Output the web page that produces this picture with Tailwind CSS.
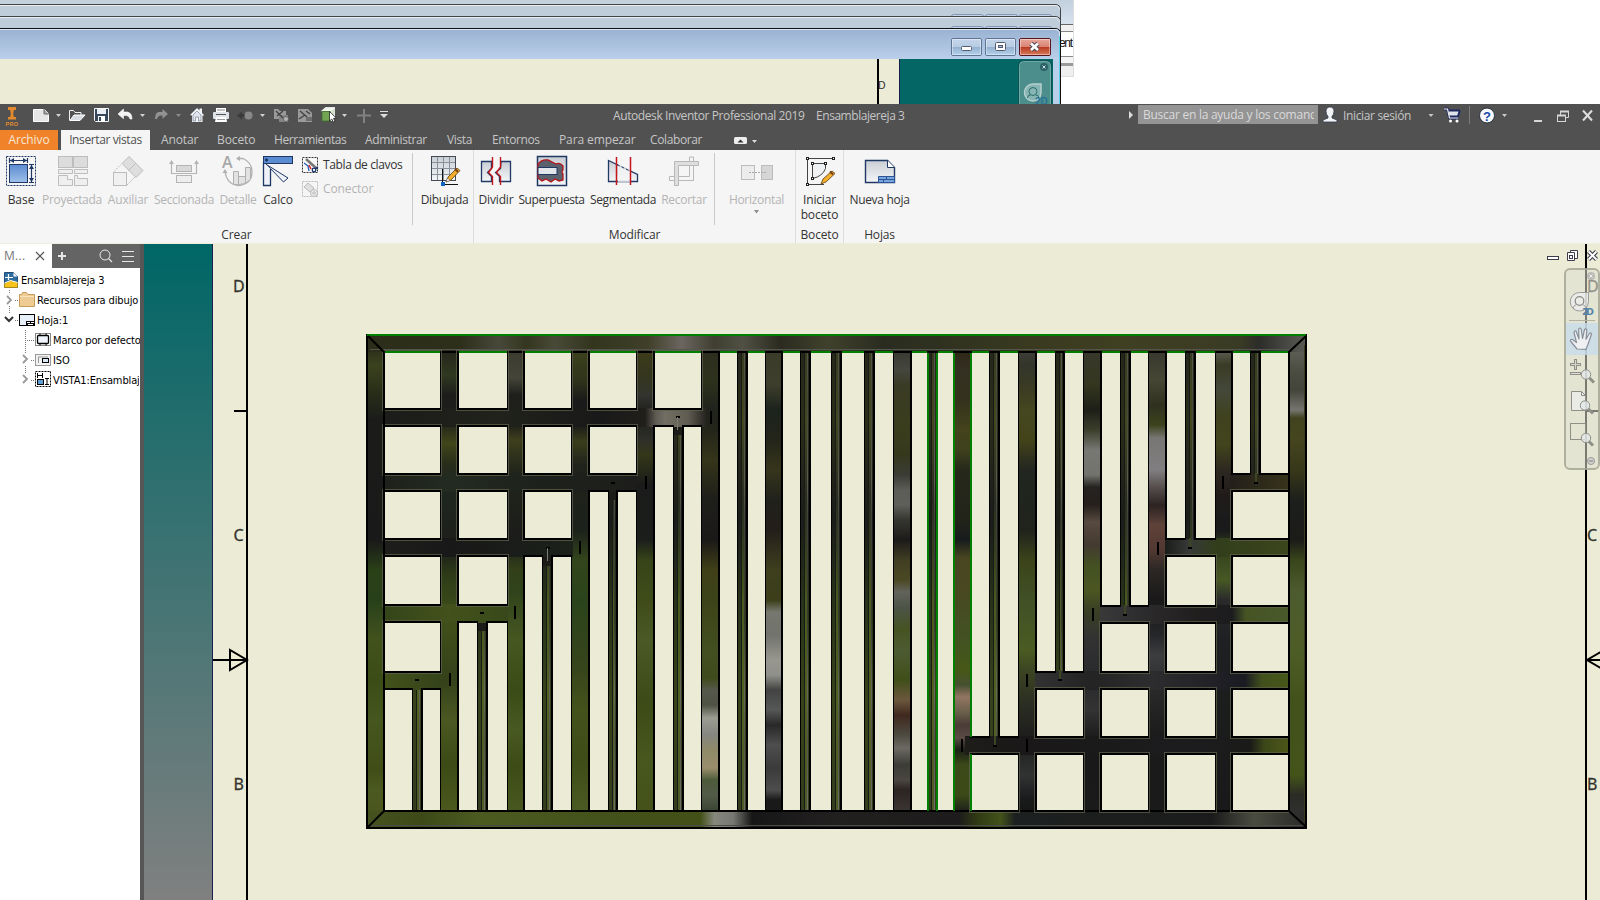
<!DOCTYPE html>
<html lang="es">
<head>
<meta charset="utf-8">
<title>Autodesk Inventor Professional 2019</title>
<script src="https://cdn.jsdelivr.net/npm/@tailwindcss/browser@4"></script>
</head>
<body class="bg-white">
<div class="w-[1600px] h-[900px] overflow-hidden flex flex-col font-['Open_Sans','Noto_Sans',sans-serif] text-[12px] text-[#333]">

  <!-- stacked background windows -->
  <div class="relative h-[104px] shrink-0 overflow-hidden bg-white">
    <svg class="block" width="1600" height="104" viewBox="0 0 1600 104">
      <defs>
        <linearGradient id="aero" x1="0" y1="0" x2="0" y2="1"><stop offset="0" stop-color="#9ab2d2"/><stop offset="1" stop-color="#b9cfea"/></linearGradient>
        <linearGradient id="aeroBack" x1="0" y1="0" x2="0" y2="1"><stop offset="0" stop-color="#c2cfdc"/><stop offset="1" stop-color="#d7e3ef"/></linearGradient>
        <linearGradient id="cap" x1="0" y1="0" x2="0" y2="1"><stop offset="0" stop-color="#c5d6ea"/><stop offset=".48" stop-color="#b7cce3"/><stop offset=".5" stop-color="#93b0cf"/><stop offset="1" stop-color="#b5d3ec"/></linearGradient>
        <linearGradient id="capR" x1="0" y1="0" x2="0" y2="1"><stop offset="0" stop-color="#e9a99d"/><stop offset=".48" stop-color="#d98474"/><stop offset=".5" stop-color="#b9381f"/><stop offset="1" stop-color="#d8805f"/></linearGradient>
      </defs>
      <rect width="1073" height="24" fill="url(#aeroBack)"/>
      <rect x="1050" y="24" width="23" height="1" fill="#666"/>
      <rect x="1050" y="25" width="23" height="6" fill="#f1f1f1"/>
      <rect x="1050" y="31" width="23" height="1" fill="#888"/>
      <text x="1059" y="47" font-size="12" fill="#111" font-family="Liberation Sans" textLength="14">ent</text>
      <rect x="1050" y="56" width="23" height="1" fill="#888"/>
      <rect x="1050" y="57" width="23" height="6" fill="#f4f4f4"/>
      <rect x="1050" y="63" width="23" height="3" fill="#999"/>
      <rect x="1050" y="66" width="23" height="10" fill="#efefef"/>
      <rect x="1050" y="76" width="23" height="1" fill="#ddd"/>
      <rect x="1073" width="1" height="77" fill="#ddd"/>
      <path d="M-3 4.500H1055Q1060.500 4.500 1060.500 10V108H-3Z" fill="#bfcddb" stroke="#444"/>
      <path d="M0 5.500H1055Q1059.500 6 1059.500 10" fill="none" stroke="#e4ecf4"/>
      <g fill="#c5d3e2" stroke="#8496b8"><rect x="951.500" y="14.500" width="32" height="8" rx="2"/><rect x="985.500" y="14.500" width="32" height="8" rx="2"/><rect x="1019.500" y="14.500" width="32" height="8" rx="2"/></g>
      <path d="M-3 16.500H1055Q1060.500 16.500 1060.500 22V108H-3Z" fill="#bfcddb" stroke="#444"/>
      <path d="M0 17.500H1055Q1059.500 18 1059.500 22" fill="none" stroke="#e4ecf4"/>
      <g fill="#c5d3e2" stroke="#8496b8"><rect x="951.500" y="26.500" width="32" height="8" rx="2"/><rect x="985.500" y="26.500" width="32" height="8" rx="2"/><rect x="1019.500" y="26.500" width="32" height="8" rx="2"/></g>
      <path d="M-3 28.500H1055Q1060.500 28.500 1060.500 34V108H-3Z" fill="#b9cfea" stroke="#111"/>
      <path d="M0 29H1055Q1060 29 1060 34V59H0Z" fill="url(#aero)"/>
      <path d="M0 29.500H1055Q1059.500 30 1059.500 34V104" fill="none" stroke="#dbe9f6"/>
      <path d="M1059.500 36V104" stroke="#58d0e8"/>
      <g stroke="#5f7596"><rect x="951.500" y="38.500" width="30" height="17" rx="1.500" fill="url(#cap)"/><rect x="985.500" y="38.500" width="30" height="17" rx="1.500" fill="url(#cap)"/><rect x="1019.500" y="38.500" width="31" height="17" rx="1.500" fill="url(#capR)" stroke="#5a1620"/></g>
      <g fill="none" stroke="#fff" stroke-opacity=".4"><rect x="952.500" y="39.500" width="28" height="15"/><rect x="986.500" y="39.500" width="28" height="15"/><rect x="1020.500" y="39.500" width="29" height="15"/></g>
      <rect x="961.500" y="46.500" width="10" height="4" rx="1" fill="#fff" stroke="#555c70"/>
      <rect x="995.500" y="42.500" width="10" height="8" rx="1" fill="#fff" stroke="#555c70"/><rect x="998.500" y="45.500" width="4" height="2" fill="#9fb8d4" stroke="#555c70"/>
      <path d="M1031 43.500l7 6.500m0-6.500l-7 6.500" stroke="#504a5a" stroke-width="4.500"/><path d="M1031 43.500l7 6.500m0-6.500l-7 6.500" stroke="#fff" stroke-width="2.500"/>
      <rect y="59" width="899" height="45" fill="#ecebd5"/>
      <rect x="877" y="59" width="2" height="45" fill="#000"/>
      <text x="878" y="89" font-size="11" fill="#333" font-family="DejaVu Sans Condensed">D</text>
      <rect x="899" y="59" width="154" height="45" fill="#056666"/><rect x="899" y="59" width="1" height="45" fill="#16204e"/>
      <rect x="1018" y="60" width="34" height="60" rx="5" fill="#0a5556"/>
      <rect x="1019.500" y="61.500" width="31" height="60" rx="4" fill="#4b8e8c" stroke="#6ea9a6"/>
      <circle cx="1044" cy="67" r="4" fill="#2b6163"/><path d="M1042.500 65.500l3 3m0-3l-3 3" stroke="#cde"/>
      <path d="M1033 84h8v9q-1 8-8 8a8.500 8.500 0 0 1 0-17Z" fill="#86b5b3" stroke="#b5d0ce" stroke-width="1.500"/>
      <circle cx="1033" cy="91.500" r="4" fill="none" stroke="#2d6d6d"/><path d="M1027.500 98q0-3 3-3m8.500 3q0-3-3-3" fill="none" stroke="#2d6d6d"/>
      <text x="1035" y="105" font-size="10" font-weight="bold" fill="#28749a" font-family="Liberation Sans">2D</text>
    </svg>
  </div>

  <!-- title bar -->
  <div class="h-[26px] shrink-0 bg-[#515151] flex items-center text-[#c6c6c6]">
    <svg class="shrink-0" width="400" height="26" viewBox="0 104 400 26">
      <g fill="#e28a2d"><path d="M8 107h8v3h-2.200l-.6 4 .6 3H16v2.500H8V117h2.200l.6-3-.6-4H8Z"/></g>
      <text x="5.500" y="126" font-size="5.500" font-weight="bold" fill="#e28a2d" font-family="Liberation Sans" textLength="12.500">PRO</text>
      <path d="M33.500 109.500h11l4 4v8h-15Z" fill="#e6e6e6" stroke="#fff"/><path d="M44 109v5h5" fill="#aaa" stroke="#666"/>
      <path d="M69.500 120.500v-10h4l1.500 2h6v2.500" fill="none" stroke="#f0f0f0"/><path d="M70 120.500l4-5.500h11l-5 5.500Z" fill="#d8dde4" stroke="#fff"/>
      <path d="M94.500 108.500h14v13h-13l-1-1Z" fill="#37475c" stroke="#f4f4f4"/><rect x="97" y="109" width="9" height="5" fill="#e9eef4"/><rect x="98" y="116" width="7" height="6" fill="#fff"/><rect x="99" y="117" width="2" height="4" fill="#37475c"/>
      <path d="M123.500 109v3h4q4.500 1 4.500 7h-2q-.5-3-3.500-3.500h-3v3.200L118 114Z" fill="#f4f4f4" stroke="#fff" stroke-width=".6"/>
      <path d="M162.500 109v3h-4q-3.500 1-3.500 7h2q.5-3 3-3.500h2.500v3.200L168 114Z" fill="#929292"/>
      <path d="M190 115l7-7 2.500 2.500V108.500h2.500v4.500l2.500 2.500h-2v6.500h-10.500v-6.500Z" fill="#f2f4f7"/><path d="M193 115l4-4 4 4v6h-2.500v-4h-3v4H193Z" fill="#dfe6ef" stroke="#66727f" stroke-width=".6"/>
      <path d="M216 113v-5h10v5" fill="#fff"/><path d="M217 110h8" stroke="#888"/><rect x="213" y="112" width="16" height="7" rx="1" fill="#dfe3e8"/><rect x="216" y="114" width="10" height="1" fill="#555"/><path d="M216 117h10l1 5h-12Z" fill="#fff"/><path d="M217 119.500h8" stroke="#999"/>
      <path d="M237 115.500l5-4v2.500h3v3h-3v2.500Z" fill="#3a3a3a"/><circle cx="248.500" cy="115.500" r="4" fill="#888"/>
      <g fill="#9a9a9a"><path d="M274 109h4l2 2h6v4l-3 4h-9Z"/><path d="M279 115h9v7h-9Z" fill="#858585"/><path d="M276 111l7 7m-6-2l6-5" stroke="#444" stroke-width="1.400"/><circle cx="286" cy="119" r="2.500" fill="#b5b5b5" stroke="#555" stroke-width=".7"/></g>
      <g fill="#9a9a9a"><path d="M298 109h10l4 4v9h-14Z"/><path d="M300 111l7 6m-1-6l4 3M299 119l6-4" stroke="#444" stroke-width="1.500"/><path d="M306 117h6v4h-6Z" fill="#6e6e6e"/></g>
      <path d="M321.500 111l4-3.500h9l-3.500 3.500Z" fill="#eef6ea" stroke="#fff" stroke-width=".7"/><path d="M322 111.500h9v9.500h-9Z" fill="#71a552" stroke="#3d6d2a" stroke-width=".8"/><path d="M331 111l3.500-3.500v9.500l-3.500 4Z" fill="#cfe0c6" stroke="#fff" stroke-width=".7"/>
      <path d="M329.500 111.500v9.500l2.300-2 1.600 3.200 1.600-.9-1.500-3h3Z" fill="#fff" stroke="#222" stroke-width=".8"/>
      <path d="M364 109v14M357 115.500h14" stroke="#818181" stroke-width="2"/>
      <path d="M380 111.500h8" stroke="#ddd"/><path d="M380 114h8l-4 4Z" fill="#ddd"/>
      <g fill="#d0d0d0"><path d="M56 114h5l-2.500 3ZM140 114h5l-2.500 3ZM260 114h5l-2.500 3ZM342 114h5l-2.500 3Z"/><path d="M176 114h5l-2.500 3Z" fill="#8c8c8c"/></g>
    </svg>
    <div class="w-[213px] shrink-0"></div>
    <div class="w-[203px] shrink-0 whitespace-nowrap pb-[2px] tracking-[-0.4px] -mt-px">Autodesk Inventor Professional 2019</div>
    <div class="w-[313px] shrink-0 whitespace-nowrap pb-[2px] tracking-[-0.45px] -mt-px">Ensamblajereja 3</div>
    <div class="w-0 h-0 border-y-[4px] border-y-transparent border-l-[4px] border-l-[#ddd] shrink-0 mb-[4px]"></div>
    <div class="ml-[5px] w-[180px] h-[19px] -mt-[6px] bg-[#949494] shrink-0 overflow-hidden whitespace-nowrap text-[#dadada] pl-[5px] leading-[19px] tracking-[-0.26px]"><div class="w-[171px] overflow-hidden">Buscar en la ayuda y los comandos</div></div>
    <svg class="shrink-0 ml-[4px]" width="18" height="26" viewBox="1322 104 18 26"><path d="M1330 107q4 0 4 4.500 0 3-2 5v1.500l5 2v2h-14v-2l5-2v-1.500q-2-2-2-5 0-4.500 4-4.500Z" fill="#f2f4f8" stroke="#333b4c" stroke-width=".8"/></svg>
    <div class="w-[85px] shrink-0 ml-[3px] whitespace-nowrap pb-[2px] tracking-[-0.35px]">Iniciar sesión</div>
    <svg class="shrink-0" width="172" height="26" viewBox="1428 104 172 26">
      <path d="M1428.500 114h5l-2.500 3ZM1502 114h5l-2.500 3Z" fill="#c8c8c8"/>
      <path d="M1444 109h3.500l2 9h8.500m-10-7h11l-1.500 5h-8.500" fill="#8c96b8" stroke="#1e2960" stroke-width="2.800" stroke-linejoin="round"/><path d="M1444 109h3.500l2 9h8.500" fill="none" stroke="#eee" stroke-width="1.200"/><path d="M1448.500 111.500h10l-1.300 4h-8Z" fill="#dfe3ea"/><circle cx="1450.500" cy="121" r="1.500" fill="#fff"/><circle cx="1457" cy="121" r="1.500" fill="#fff"/>
      <rect x="1469" y="106" width="1" height="18" fill="#7b7b7b"/>
      <circle cx="1487" cy="115.500" r="7.500" fill="#f6f8fc" stroke="#252c3c"/><text x="1487" y="120.500" text-anchor="middle" font-size="13" font-weight="bold" fill="#1747a8" font-family="Liberation Sans">?</text>
      <rect x="1534" y="120" width="8" height="2" fill="#d6d6d6"/>
      <path d="M1560.500 115v-3.500h8v6h-2.500" fill="none" stroke="#d6d6d6"/><path d="M1560 111.500h9M1557 115.500h9" stroke="#d6d6d6" stroke-width="2"/><rect x="1557.500" y="115.500" width="8" height="6" fill="none" stroke="#d6d6d6"/>
      <path d="M1583 110.500l9 10m0-10l-9 10" stroke="#dedede" stroke-width="2"/>
    </svg>
  </div>

  <!-- ribbon tabs -->
  <div class="h-5 shrink-0 bg-[#515151] flex text-[#c6c6c6] leading-5 whitespace-nowrap tracking-[-0.38px]">
    <div class="w-[58px] bg-[#f08229] text-center text-[#f6e6d6] tracking-[-0.1px]">Archivo</div>
    <div class="ml-[3px] w-[89px] bg-[#f5f5f5] text-center text-[#505050]">Insertar vistas</div>
    <div class="ml-[11px] w-[56px] tracking-[-0.1px]">Anotar</div>
    <div class="w-[57px] tracking-[-0.1px]">Boceto</div>
    <div class="w-[91px]">Herramientas</div>
    <div class="w-[82px]">Administrar</div>
    <div class="w-[45px]">Vista</div>
    <div class="w-[67px]">Entornos</div>
    <div class="w-[91px] tracking-[-0.1px]">Para empezar</div>
    <div class="w-[83px]">Colaborar</div>
    <svg width="26" height="20" viewBox="733 130 26 20"><rect x="734" y="137" width="13" height="7" rx="1.500" fill="#eee"/><path d="M737.500 142.500h6l-3-3Z" fill="#333"/><path d="M752 140h5l-2.500 3Z" fill="#ddd"/></svg>
  </div>

  <!-- ribbon panels -->
  <div class="h-[94px] shrink-0 bg-[#f5f5f5] border-b border-[#eeeed8] flex whitespace-nowrap tracking-[-0.3px] leading-[15px]" id="ribbon">
    <div class="w-[473px] shrink-0 flex flex-col">
      <div class="flex h-[78px] pt-[5px]">
        <div class="w-[42px] flex flex-col items-center"><svg width="32" height="32" viewBox="0 0 32 32"><rect x="1.500" y="1.500" width="29" height="29" fill="none" stroke="#1f3864" stroke-dasharray="2 1"/><defs><linearGradient id="bl" x1="0" y1="0" x2="0" y2="1"><stop offset="0" stop-color="#5b8bd0"/><stop offset="1" stop-color="#9fc0ea"/></linearGradient><linearGradient id="gy" x1="0" y1="0" x2="0" y2="1"><stop offset="0" stop-color="#c9ced4"/><stop offset="1" stop-color="#f4f6f8"/></linearGradient></defs><rect x="4.500" y="9.500" width="18" height="18" fill="url(#bl)" stroke="#1f3864"/><path d="M4.500 3v5M22.500 3v5M5 5.500h17M24 9.500h5M24 27.500h5M26.500 10v17" stroke="#1f3864" stroke-width="1.200"/><path d="M5 5.500l4-2.500v5ZM22 5.500l-4-2.500v5ZM26.500 10l-2.500 4h5ZM26.500 27l-2.500-4h5Z" fill="#1f3864"/></svg><span class="mt-[5px] tracking-[-0.05px]">Base</span></div>
        <div class="w-[60px] flex flex-col items-center text-[#b4b4b4]"><svg width="32" height="32" viewBox="0 0 32 32" stroke="#bdbdbd" class="ml-[2px]"><g fill="#dcdcdc"><rect x="1.500" y="1.500" width="14" height="11"/><rect x="16.500" y="1.500" width="14" height="11"/></g><g fill="#efefef"><path d="M1.500 14.500h14v4h-14ZM17.500 14.500h13v4h-13ZM1.500 20.500h9v4h5v6h-14ZM17.500 20.500h3v3h10v7h-13Z"/></g></svg><span class="mt-[5px]">Proyectada</span></div>
        <div class="w-[52px] flex flex-col items-center text-[#b4b4b4]"><svg width="32" height="32" viewBox="0 0 32 32" stroke="#bcbcbc"><path d="M17 1.500l14 14-7 7-14-14Z" fill="#dedede"/><path d="M23.500 8.500l-7 7"/><rect x="1.500" y="17.500" width="13" height="13" fill="#f0f0f0"/><path d="M2 16.500l7-7M15 30l8-8" stroke-dasharray="2 1"/></svg><span class="mt-[5px] tracking-[-0.2px]">Auxiliar</span></div>
        <div class="w-[60px] flex flex-col items-center text-[#b4b4b4]"><svg width="32" height="32" viewBox="0 0 32 32" stroke="#b4b4b4"><rect x="8.500" y="10.500" width="15" height="6" fill="#d8d8d8"/><rect x="8.500" y="20.500" width="15" height="7" fill="#eee"/><path d="M3.500 7v11.500h25V7" fill="none" stroke-width="1.200"/><path d="M3.500 5l-2.500 4h5ZM28.500 5l-2.500 4h5Z" fill="#b4b4b4" stroke="none"/></svg><span class="mt-[5px]">Seccionada</span></div>
        <div class="w-[48px] flex flex-col items-center text-[#b4b4b4]"><svg width="32" height="32" viewBox="0 0 32 32" stroke="#b0b0b0"><text x="0" y="13" font-size="16" fill="#a8a8a8" stroke="none" font-weight="600">A</text><path d="M15 3.500h6q9 4 9 13 0 13-14 14-11-1-13-14" fill="none" stroke-width="1.300"/><path d="M14 3.500l4-2.500v5ZM3 14l-2.500 4h5Z" fill="#b0b0b0" stroke="none"/><path d="M11.500 16.500h5v5h7v-9h5v12q-6 6-17 5Z" fill="#e2e2e2"/><path d="M16.500 21v8M23.500 21v7"/></svg><span class="mt-[5px]">Detalle</span></div>
        <div class="w-[32px] flex flex-col items-center"><svg width="32" height="32" viewBox="0 0 32 32" stroke="#1f3864"><path d="M2 8l24 15-4.500 4L5 10Z" fill="#eef2f8" stroke-linejoin="round"/><path d="M1.500 7v23.500h7V14" fill="#eef2f8" stroke-width="1.300"/><rect x="1.500" y="1.500" width="29" height="7" fill="#5b8bd0"/><circle cx="4.500" cy="5" r="1.200" fill="#1f3864"/></svg><span class="mt-[5px] tracking-[-0.1px]">Calco</span></div>
        <div class="ml-[7px] flex flex-col w-[112px] border-r border-[#c9c9c9] h-[72px] -mt-[2px] pt-[1px]">
          <div class="flex items-center h-6 gap-1 -mt-px"><svg width="18" height="18" viewBox="0 0 18 18"><rect x="1.500" y="1.500" width="15" height="15" fill="#f8f8f8" stroke="#333" stroke-dasharray="2 1"/><path d="M3 7l4 3 1 5" fill="none" stroke="#2b67c0" stroke-width="1.400"/><path d="M5 3l10 9" stroke="#777" stroke-width="2.500"/><path d="M8 9l2 4" stroke="#d22" stroke-width="1.500"/><circle cx="13" cy="14" r="1.800" fill="none" stroke="#16336b" stroke-width="1.300"/><circle cx="16" cy="12" r="1.200" fill="#16336b"/></svg><span class="pb-[1px] tracking-[-0.38px]">Tabla de clavos</span></div>
          <div class="flex items-center h-6 gap-1 text-[#b4b4b4]"><svg width="18" height="18" viewBox="0 0 18 18" fill="none" stroke="#bbb"><rect x="1.500" y="1.500" width="15" height="15" stroke-dasharray="2 1"/><path d="M3 7l4-4 6 5-4 4Z" fill="#e0e0e0"/><circle cx="13" cy="13" r="3.500" fill="#eee"/><circle cx="13" cy="13" r="1.300"/></svg><span class="pb-[1px] tracking-[-0.1px]">Conector</span></div>
        </div>
        <div class="w-[60px] flex flex-col items-center pl-[3px]"><svg width="32" height="32" viewBox="0 0 32 32"><rect x="2.500" y="1.500" width="24" height="24" fill="url(#gy)" stroke="#444a55"/><path d="M8.500 2v23M14.500 2v23M20.500 2v23M3 7.500h23M3 13.500h23M3 19.500h23" stroke="#8a919b"/><path d="M13.500 14v13M14 29.500h15" stroke="#111"/><rect x="12" y="27" width="4" height="4" fill="#0b63c0"/><path d="M17 27l2-5 9-9 3 2.500-9 9.500Z" fill="#f2ae2c" stroke="#5b3a10" stroke-width=".8"/><path d="M26 14l3 3" stroke="#7a4010" stroke-width="2"/><path d="M17 27l1.500-4 2.500 2.500Z" fill="#fff" stroke="#444" stroke-width=".5"/></svg><span class="mt-[5px]">Dibujada</span></div>
      </div>
      <div class="text-center -mt-[1px] tracking-[-0.1px]">Crear</div>
    </div>
    <div class="w-[322px] shrink-0 flex flex-col border-l border-[#dcdcdc]">
      <div class="flex h-[78px] pt-[5px]">
        <div class="w-[44px] shrink-0 flex flex-col items-center"><svg width="32" height="32" viewBox="0 0 32 32"><path d="M1.500 6.500h10v7l-4 4 4 4v5h-10ZM21 6.500h9.500v20H19.500v-5l-4-4 5-4Z" fill="url(#gy)" stroke="#1f3864" stroke-width="1.300"/><path d="M12.500 2v10l-4 5.500 4 4V30M20.500 2v10l-4 5.500 4 4V30" fill="none" stroke="#c4161c" stroke-width="1.400"/></svg><span class="mt-[5px] tracking-[-0.15px]">Dividir</span></div>
        <div class="w-[67px] shrink-0 flex flex-col items-center"><svg width="32" height="32" viewBox="0 0 32 32"><rect x="1.500" y="1.500" width="29" height="29" fill="url(#gy)" stroke="#1f3864" stroke-width="1.500"/><path d="M2 9q4-5 10-4 4 2 8 4 4-2 7 2v4q-2 1 0 4v6l-4 1-4-2-4 3-5-3-4 2-4-3Z" fill="#5b626e" stroke="#b3161c" stroke-width="1.300"/><rect x="2" y="12.500" width="19" height="7" fill="#e2e5ea" stroke="#1f3864"/></svg><span class="mt-[5px] tracking-[-0.45px]">Superpuesta</span></div>
        <div class="w-[76px] shrink-0 flex flex-col items-center"><svg width="32" height="32" viewBox="0 0 32 32"><path d="M1.500 5.500l29 14v7h-29Z" fill="url(#gy)" stroke="#1f3864" stroke-width="1.300"/><rect x="11" y="7" width="12" height="20" fill="#f5f5f5" opacity=".75"/><path d="M10 9.500l14 7" stroke="#1f3864" stroke-dasharray="3 2"/><path d="M9.500 2v28M23.500 2v28" stroke="#c4161c" stroke-width="1.500"/></svg><span class="mt-[5px] tracking-[-0.4px]">Segmentada</span></div>
        <div class="w-[46px] shrink-0 flex flex-col items-center text-[#b4b4b4]"><svg width="32" height="32" viewBox="0 0 32 32" fill="#dedede" stroke="#b8b8b8"><path d="M6.500 6.500h24v4H10.500v20h-4Z"/><path d="M21.500 6v-4h4v4M21.500 11v10.500H11M25.500 11v14.500H11M6 21.500H1.500v4H6" fill="none"/></svg><span class="mt-[5px]">Recortar</span></div>
        <div class="w-[8px] shrink-0 h-[72px] -mt-[2px] border-r border-[#c9c9c9]"></div>
        <div class="w-[83px] shrink-0 flex flex-col items-center text-[#b4b4b4]"><svg width="34" height="32" viewBox="0 0 34 32" stroke="#bcbcbc"><rect x="1.500" y="10.500" width="13" height="14" fill="#ececec"/><rect x="21.500" y="10.500" width="11" height="14" fill="#d6d6d6"/><path d="M9 17.500h18" stroke="#aaa" stroke-dasharray="2 1"/></svg><span class="mt-[5px]">Horizontal</span><svg class="mt-[3px]" width="6" height="4"><path d="M0 0h5l-2.500 3.500Z" fill="#8c8c8c"/></svg></div>
      </div>
      <div class="text-center -mt-[1px] tracking-[-0.15px]">Modificar</div>
    </div>
    <div class="w-[49px] shrink-0 flex flex-col border-x border-[#dcdcdc]">
      <div class="flex flex-col items-center h-[78px] pt-[5px]"><svg width="32" height="32" viewBox="0 0 32 32" fill="none" stroke="#444"><path d="M2.500 3.500h28M3.500 2.500v26M3 29.500h17"/><path d="M8.500 8.500h13v5q-3 8-13 10Z" fill="#f0f1f3"/><g fill="#fff" stroke="#222"><rect x="2.500" y="2.500" width="2" height="2"/><rect x="28.500" y="2.500" width="2" height="2"/><rect x="2.500" y="28.500" width="2" height="2"/><rect x="7.500" y="7.500" width="2" height="2"/><rect x="20.500" y="7.500" width="2" height="2"/><rect x="7.500" y="22.500" width="2" height="2"/></g><path d="M17 29l2-5 9-8 3 2.500-9 8.500Z" fill="#f2ae2c" stroke="#5b3a10" stroke-width=".8"/><path d="M26 16.500l3 3" stroke="#7a4010" stroke-width="2"/></svg><span class="mt-[5px] text-center tracking-[-0.15px]">Iniciar<br>boceto</span></div>
      <div class="text-center -mt-[1px] tracking-[-0.15px]">Boceto</div>
    </div>
    <div class="w-[71px] shrink-0 flex flex-col">
      <div class="flex flex-col items-center h-[78px] pt-[5px]"><svg width="32" height="32" viewBox="0 0 32 32"><path d="M1.500 5.500h22l7 7v15h-29Z" fill="url(#gy)" stroke="#1f3864" stroke-width="1.400"/><path d="M23.500 5.500v7h7" fill="#fff" stroke="#1f3864"/><path d="M14.500 21.500h16v6h-16Z" fill="#7aa5dc" stroke="#2b5597"/><path d="M14 24.500h17M22.500 22v2.500M19.500 24.500v3" stroke="#2b5597"/></svg><span class="mt-[5px]">Nueva hoja</span></div>
      <div class="text-center -mt-[1px] tracking-[-0.15px]">Hojas</div>
    </div>
  </div>

  <!-- work area -->
  <div class="h-[656px] shrink-0 flex">
    <!-- model browser -->
    <div class="w-[140px] shrink-0 bg-white flex flex-col overflow-hidden">
      <div class="h-6 flex bg-[#646464] shrink-0">
        <div class="w-[52px] bg-white flex items-center pl-1 text-[#777] pb-[1px]"><span class="w-[31px] tracking-[0.3px]">M...</span><svg width="10" height="10" viewBox="0 0 10 10"><path d="M1 1l8 8m0-8l-8 8" stroke="#555" stroke-width="1.200"/></svg></div>
        <svg width="88" height="24" viewBox="52 244 88 24" fill="none" stroke="#e6e6e6"><path d="M62 252v8M58 256h8" stroke-width="2"/><circle cx="105" cy="255" r="5"/><path d="M108.500 258.500l3.500 3.500M122 251.500h12M122 256.500h12M122 261.500h12" stroke-width="1.200"/></svg>
      </div>
      <div class="flex flex-col pt-[3px] pl-1 font-['DejaVu_Sans_Condensed','DejaVu_Sans',sans-serif] text-[11px] text-black whitespace-nowrap tracking-[-0.13px] leading-[20px] [&_svg]:-translate-y-px">
        <div class="h-5 flex items-center"><svg class="mr-[3px] shrink-0" width="14" height="16" viewBox="0 0 14 16"><path d="M.5 .5h9l4 4v11h-13Z" fill="#2f6d9f" stroke="#1f4e7a"/><path d="M9.500 .5v4h4Z" fill="#fff"/><path d="M.5 15.500v-4l6-3 7 2v5Z" fill="#f6c21c" stroke="#b98a00" stroke-width=".6"/><path d="M.5 11l6-2.500 7 2" fill="none" stroke="#fff"/><path d="M1 5.500h8M4.500 2v6" stroke="#fff" stroke-width="1.200"/></svg>Ensamblajereja 3</div>
        <div class="h-5 flex items-center"><svg class="mr-[2px] shrink-0" width="31" height="20" viewBox="4 290 31 20"><path d="M7 296l4 4-4 4" fill="none" stroke="#999" stroke-width="1.800"/><path d="M9.500 290v4M9.500 306v4M15 300.500h4" stroke="#777" stroke-dasharray="1 1"/><path d="M19.500 306.500v-12h2l1-2h4l1.500 2h6.500v12Z" fill="#edcb92" stroke="#c79b59"/><path d="M20 296.500h14" stroke="#f9e4bd"/></svg>Recursos para dibujo</div>
        <div class="h-5 flex items-center"><svg class="mr-[2px] shrink-0" width="31" height="20" viewBox="4 310 31 20"><path d="M5 317l4 4 4-4" fill="none" stroke="#333" stroke-width="2"/><path d="M9.500 310v4M15 320.500h4" stroke="#777" stroke-dasharray="1 1"/><rect x="19.500" y="314.500" width="15" height="11" fill="#e7f0f8" stroke="#000"/><path d="M26 321h8v5h-8Z" fill="#000"/><path d="M27 322.500h3m1 0h3m-6 2h5" stroke="#fff"/></svg>Hoja:1</div>
        <div class="h-5 flex items-center"><svg class="mr-[2px] shrink-0" width="47" height="20" viewBox="4 330 47 20"><path d="M25.500 330v20M27 340.500h7" stroke="#777" stroke-dasharray="1 1"/><rect x="35.500" y="333.500" width="15" height="12" fill="#fff" stroke="#888"/><rect x="37.500" y="335.500" width="11" height="8" rx="1" fill="#eef4fa" stroke="#000" stroke-width="1.300"/><path d="M40 333.500v2m6-2v2m-6 8v2m6-2v2" stroke="#000"/></svg>Marco por defecto</div>
        <div class="h-5 flex items-center"><svg class="mr-[2px] shrink-0" width="47" height="20" viewBox="4 350 47 20"><path d="M23 355l4 4-4 4" fill="none" stroke="#999" stroke-width="1.800"/><path d="M25.500 350v4M25.500 366v4M31 360.500h4" stroke="#777" stroke-dasharray="1 1"/><rect x="35.500" y="354.500" width="15" height="11" fill="#f2f2f2" stroke="#999"/><path d="M38 357h10M38.500 357v6" stroke="#999"/><rect x="42.500" y="358.500" width="6" height="4" fill="#dbe9f6" stroke="#000"/></svg>ISO</div>
        <div class="h-5 flex items-center"><svg class="mr-[2px] shrink-0" width="47" height="20" viewBox="4 370 47 20"><path d="M23 375l4 4-4 4" fill="none" stroke="#999" stroke-width="1.800"/><path d="M25.500 370v4M31 380.500h4" stroke="#777" stroke-dasharray="1 1"/><rect x="35.500" y="371.500" width="15" height="15" fill="#fff" stroke="#000" stroke-dasharray="2 1"/><rect x="37.500" y="379.500" width="6" height="5" fill="#5e9fd6" stroke="#000"/><path d="M37.500 373v5m5-5v5m-5-2.500h5M45 378.500h4M45 384.500h4M47 378.500v6" stroke="#000"/></svg><span class="w-[86px] overflow-hidden">VISTA1:Ensamblajereja</span></div>
      </div>
    </div>
    <div class="w-1 bg-[#565656] shrink-0"></div>

    <!-- drawing sheet -->
    <svg class="block shrink-0" width="1456" height="656" viewBox="144 244 1456 656" shape-rendering="auto">
      <defs>
        <linearGradient id="desk" x1="0" y1="0" x2="0" y2="1"><stop offset="0" stop-color="#006666"/><stop offset="1" stop-color="#808080"/></linearGradient>
        <linearGradient id="topBar"><stop offset="0" stop-color="#2c2d1a"/><stop offset=".1" stop-color="#2d2f1b"/><stop offset=".14" stop-color="#48483a"/><stop offset=".17" stop-color="#35361f"/><stop offset=".2" stop-color="#494938"/><stop offset=".24" stop-color="#33351d"/><stop offset=".3" stop-color="#40402a"/><stop offset=".335" stop-color="#6b6660"/><stop offset=".37" stop-color="#3f3e30"/><stop offset=".4" stop-color="#505144"/><stop offset=".44" stop-color="#2b2b20"/><stop offset=".49" stop-color="#40412c"/><stop offset=".55" stop-color="#2a2c20"/><stop offset=".7" stop-color="#38391f"/><stop offset=".8" stop-color="#3f3f22"/><stop offset=".93" stop-color="#3a3b24"/><stop offset=".95" stop-color="#2c2c2a"/><stop offset="1" stop-color="#5b5b55"/></linearGradient>
        <linearGradient id="botBar"><stop offset="0" stop-color="#465220"/><stop offset=".06" stop-color="#3d4a18"/><stop offset=".12" stop-color="#4b5b20"/><stop offset=".25" stop-color="#43521a"/><stop offset=".355" stop-color="#435018"/><stop offset=".37" stop-color="#85877c"/><stop offset=".39" stop-color="#777873"/><stop offset=".41" stop-color="#171717"/><stop offset=".5" stop-color="#221f1f"/><stop offset=".63" stop-color="#1d1b1b"/><stop offset=".65" stop-color="#303a14"/><stop offset=".675" stop-color="#42521a"/><stop offset=".69" stop-color="#1d2020"/><stop offset=".9" stop-color="#1b1b1b"/><stop offset=".945" stop-color="#4a4c40"/><stop offset=".97" stop-color="#3a3b33"/><stop offset="1" stop-color="#2a2b2a"/></linearGradient>
      </defs>
      <rect x="144" y="244" width="69" height="656" fill="url(#desk)"/>
      <rect x="212" y="244" width="1" height="656" fill="#1a2252"/>
      <rect x="213" y="244" width="1387" height="656" fill="#ecebd5"/>
      <rect x="246" y="244" width="2" height="656"/><rect x="234" y="410" width="13" height="2"/>
      <rect x="213" y="659" width="34" height="2"/><path d="M230 650v20l17-10Z" fill="none" stroke="#000" stroke-width="2"/>
      <rect x="1585" y="244" width="2" height="656"/><rect x="1586" y="410" width="13" height="2"/>
      <path d="M1586 660h14M1604 650l-17 10 17 10" fill="none" stroke="#000" stroke-width="2"/>
      <g font-family="Noto Sans" font-size="16" fill="#34342e" stroke="#34342e" stroke-width=".3"><text x="233" y="292">D</text><text x="233.500" y="541">C</text><text x="233.500" y="790">B</text><text x="1587" y="292">D</text><text x="1587" y="541">C</text><text x="1587" y="790">B</text></g>
      <g id="grille"></g>
      <!-- document window buttons -->
      <g fill="#fff" stroke="#3c3c4c"><rect x="1547.500" y="256.500" width="11" height="3"/><path d="M1570.500 250.500h7v8h-7Z"/><path d="M1567.500 252.500h7v8h-7Z"/><rect x="1569.500" y="255.500" width="3" height="3"/></g>
      <path d="M1588.500 251.500l8 8m0-8l-8 8" stroke="#3c3c4c" stroke-width="4.200"/><path d="M1588.500 251.500l8 8m0-8l-8 8" stroke="#fff" stroke-width="2"/>
      <!-- navigation bar -->
      <rect x="1565" y="269" width="34" height="200" rx="5" fill="#deded0" fill-opacity=".55" stroke="#a6a695" stroke-opacity=".85" stroke-width="2"/>
      <circle cx="1591" cy="276" r="4" fill="#aaa" fill-opacity=".7"/><path d="M1589.500 274.500l3 3m0-3l-3 3" stroke="#eee"/>
      <path d="M1579.500 292.500h9v9q-1 9.500-9 9.500a9.200 9.200 0 0 1 0-18.500Z" fill="#eee" fill-opacity=".75" stroke="#9b9b9b"/><circle cx="1579.500" cy="301" r="4.300" fill="none" stroke="#888" stroke-width="1.200"/><path d="M1573 308q1-3 3.500-3.500m9.500 3.500q-1-3-3.500-3.500" fill="none" stroke="#999"/>
      <text x="1582" y="314.500" font-size="9.500" font-weight="bold" fill="#5683a8" font-family="DejaVu Sans" textLength="12">2D</text>
      <rect x="1569" y="320" width="26" height="1" fill="#b1b1a4"/>
      <rect x="1566" y="323" width="32" height="32" fill="#c8dcec" fill-opacity=".8"/>
      <path d="M1577 349l-6.500-8q-.5-2 2-1.500l4 3-2.500-10q0-2 2-1.500l3 8-.3-10q1-2 2.500 0l1.300 9.500 2-9q1.500-1.500 2.300.3l-.8 9.500 3.500-6q2-1 2 1l-3.500 10-2 5Z" fill="#eef0f2" stroke="#888f99" stroke-width="1.200" stroke-linejoin="round"/>
      <g fill="none" stroke="#8f8f88"><path d="M1575.500 359v11M1570 364.500h11" stroke-width="3"/><path d="M1575.500 360v9M1571 364.500h9" stroke="#d6d6ca"/><rect x="1570.500" y="372.500" width="10" height="2" fill="#ddd"/><path d="M1571.500 391.500h10l4 4v15h-14Z" fill="#eee" fill-opacity=".7"/><path d="M1581.500 391.500v4h4"/><rect x="1570.500" y="423.500" width="15" height="16"/></g>
      <g stroke="#8f8f88" fill="#e2e8ea" fill-opacity=".8"><path d="M1589.500 378l4.500 4.500M1588.500 409l4.500 4.500M1588.500 441l4.500 4.500" stroke-width="3"/><circle cx="1586" cy="374.500" r="4.700"/><circle cx="1585" cy="405.500" r="4.700"/><circle cx="1586" cy="438" r="4.700"/></g>
      <circle cx="1591" cy="461" r="3.500" fill="#ccc" fill-opacity=".7" stroke="#999"/><path d="M1589 461h4" stroke="#777"/>
    </svg>
  </div>
</div>

<script>
// Grille geometry in sheet coordinates.
const NS = 'http://www.w3.org/2000/svg';
const g = document.getElementById('grille');
const add = (tag, attrs) => { const e = document.createElementNS(NS, tag); for (const k in attrs) e.setAttribute(k, attrs[k]); g.appendChild(e); return e; };
let gid = 0;
// stops: [coordinate, colour] pairs along the bar
function grad(stops, horizontal, a, b) {
  const id = 'm' + gid++;
  const lg = add('linearGradient', horizontal ? {id, gradientUnits: 'userSpaceOnUse', x1: a, x2: b, y1: 0, y2: 0} : {id, gradientUnits: 'userSpaceOnUse', x1: 0, x2: 0, y1: a, y2: b});
  for (const [p, c] of stops) { const s = document.createElementNS(NS, 'stop'); s.setAttribute('offset', (p - a) / (b - a)); s.setAttribute('stop-color', c); lg.appendChild(s); }
  return 'url(#' + id + ')';
}
const rect = (x1, y1, x2, y2, fill) => add('rect', {x: x1, y: y1, width: x2 - x1, height: y2 - y1, fill});

rect(366, 334, 1307, 829, '#1b1c18');

const bars = [
  [367, 385, [[336,'#1f2117'],[365,'#3b421e'],[390,'#2a2f18'],[420,'#1b1c1a'],[540,'#191919'],[570,'#2a4017'],[600,'#28401a'],[640,'#42521c'],[680,'#3c4c16'],[720,'#46561f'],[770,'#414d16'],[790,'#4b5a20'],[828,'#4a521c']]],
  [440, 459, [[352,'#25261a'],[375,'#303820'],[395,'#1c1d1b'],[420,'#1d1f1a'],[443,'#414619'],[465,'#272c1b'],[490,'#1e2620'],[550,'#1d1e1a'],[575,'#2d3c17'],[620,'#41501a'],[680,'#34411a'],[720,'#4b5822'],[765,'#3c4a15'],[810,'#4b591e']]],
  [507, 525, [[352,'#3c3b2f'],[378,'#444438'],[395,'#1e1f1c'],[425,'#20211a'],[440,'#3e3f1c'],[470,'#22261b'],[540,'#1b1c1b'],[570,'#334019'],[590,'#2f431b'],[640,'#475722'],[690,'#3b4b17'],[730,'#495922'],[765,'#3d4c16'],[810,'#48571f']]],
  [571, 590, [[352,'#3b401e'],[380,'#30341a'],[400,'#1a1a1a'],[425,'#1b1b1a'],[442,'#3a3d1a'],[465,'#20231b'],[530,'#1c211b'],[560,'#33451b'],[600,'#2b431b'],[670,'#37451b'],[710,'#44531c'],[760,'#3e4d17'],[810,'#4b5a22']]],
  [636, 655, [[352,'#3c3b1b'],[375,'#34361d'],[395,'#33342e'],[415,'#1c1c1b'],[440,'#2f2f29'],[455,'#343719'],[485,'#1a1b1a'],[540,'#1b1e1b'],[560,'#374418'],[600,'#3f4c1a'],[640,'#4b5926'],[700,'#3c4b17'],[760,'#48571d'],[810,'#44521a']]],
  [701, 720, [[352,'#2e2e1f'],[380,'#2d321d'],[410,'#1f231c'],[430,'#24251a'],[460,'#35351a'],[500,'#1e1e1b'],[540,'#1b1918'],[570,'#404018'],[600,'#3c4318'],[650,'#434f20'],[678,'#3f4b1c'],[690,'#55584a'],[705,'#4e5244'],[718,'#9b9c92'],[735,'#85867f'],[750,'#8e8a68'],[768,'#9a8d6c'],[780,'#4d5b3b'],[795,'#535a48'],[810,'#3a4634']]],
  [765, 783, [[352,'#3b3b2a'],[385,'#3d3e2b'],[410,'#1c221d'],[440,'#24251a'],[470,'#36351c'],[500,'#20211b'],[530,'#241e1a'],[570,'#3d3f1e'],[600,'#3b3e18'],[612,'#76786f'],[635,'#71736c'],[660,'#98978f'],[675,'#90908b'],[690,'#424342'],[710,'#565757'],[725,'#292828'],[745,'#4f4e4f'],[768,'#3b3b3b'],[790,'#4d4d4e'],[800,'#1b1a1a'],[810,'#191919']]],
  [893, 912, [[352,'#393b33'],[370,'#45463e'],[385,'#3a3b24'],[430,'#3a3d1c'],[455,'#36381d'],[475,'#3a3c35'],[490,'#5c5d57'],[505,'#5f5f5b'],[520,'#363630'],[540,'#1d1b1a'],[560,'#403e22'],[580,'#4a4823'],[592,'#62635b'],[608,'#4c5346'],[630,'#465321'],[650,'#4d5b32'],[680,'#3f4f19'],[700,'#6b573d'],[715,'#40281e'],[735,'#4d4a40'],[748,'#6b6962'],[765,'#3c3c36'],[780,'#4a4641'],[790,'#2b2422'],[810,'#3a3432']]],
  [953, 972, [[352,'#2e2717'],[370,'#343022'],[400,'#34321c'],[430,'#43431c'],[450,'#3e411c'],[470,'#26281b'],[520,'#22241a'],[540,'#181b1c'],[558,'#484621'],[590,'#484821'],[640,'#425222'],[670,'#465817'],[685,'#465031'],[697,'#927563'],[712,'#6b604a'],[725,'#4a3b36'],[738,'#5a4b45'],[750,'#1c2017'],[765,'#3b4918'],[795,'#3b4a17'],[810,'#20241b']]],
  [1018, 1037, [[352,'#3c3d35'],[365,'#33352a'],[390,'#3b3c22'],[412,'#45481f'],[440,'#43431a'],[470,'#222620'],[530,'#1f231c'],[560,'#3b431a'],[600,'#415026'],[650,'#4a5b22'],[670,'#3c4522'],[700,'#2c3022'],[740,'#1c1c1c'],[775,'#313232'],[800,'#191a1b'],[810,'#161616']]],
  [1083, 1102, [[352,'#37382b'],[385,'#34361f'],[410,'#1d1f18'],[430,'#3c3e2b'],[450,'#777873'],[475,'#72736d'],[487,'#252320'],[505,'#261f1c'],[522,'#574a40'],[545,'#443a30'],[565,'#435022'],[590,'#4b5622'],[610,'#3a4024'],[640,'#323233'],[680,'#28292b'],[710,'#343334'],[740,'#191919'],[810,'#1b1a1a']]],
  [1148, 1167, [[352,'#38382f'],[380,'#454633'],[405,'#2f301f'],[425,'#3c431d'],[438,'#777673'],[470,'#807e80'],[487,'#574f4e'],[505,'#2c2322'],[525,'#5e423a'],[550,'#523832'],[570,'#2b2725'],[600,'#1a1919'],[635,'#252629'],[655,'#3c3d3f'],[690,'#29292a'],[740,'#1a1a1b'],[810,'#1a1a1a']]],
  [1215, 1233, [[352,'#5a5a4f'],[365,'#3a3b25'],[390,'#44483a'],[415,'#3f421e'],[445,'#41441c'],[470,'#2d2820'],[495,'#201b1a'],[530,'#191a1b'],[550,'#33411c'],[580,'#475824'],[600,'#2a2a2b'],[640,'#1e2023'],[690,'#1c1d1d'],[810,'#191919']]],
  [1288, 1306, [[336,'#6a6a64'],[370,'#4c4e42'],[390,'#43443a'],[410,'#75756f'],[418,'#40431e'],[440,'#45461e'],[475,'#343419'],[500,'#1c1f1c'],[540,'#1b1b18'],[560,'#39451a'],[590,'#4c5b2e'],[650,'#4d5d26'],[700,'#42521a'],[740,'#43521a'],[775,'#445419'],[795,'#2a2b24'],[828,'#35353a']]]
];
bars.forEach(([a, b, s]) => rect(a, s[0][0], b, s[s.length - 1][0], grad(s, false, s[0][0], s[s.length - 1][0])));

// horizontal members: [x1, x2, y1, y2, stops]
const rows = [
  [385, 645, 408, 427, [[385,'#1c1c1a'],[500,'#20221b'],[600,'#191919'],[645,'#211f1b']]],
  [645, 706, 408, 427, [[645,'#211f1b'],[656,'#5f5c54'],[665,'#716e64'],[688,'#605c52'],[706,'#25241f']]],
  [385, 637, 473, 492, [[385,'#1e211b'],[450,'#232b21'],[540,'#1d211c'],[637,'#1d1e1b']]],
  [385, 573, 538, 557, [[385,'#1d1e1c'],[450,'#181818'],[573,'#1c211a']]],
  [385, 508, 604, 623, [[385,'#34451a'],[450,'#43521b'],[508,'#38481a']]],
  [385, 442, 671, 690, [[385,'#43511b'],[442,'#34431a']]],
  [1230, 1288, 473, 492, [[1230,'#241f1a'],[1288,'#36331b']]],
  [1165, 1288, 538, 557, [[1165,'#1b1d1a'],[1190,'#373a38'],[1215,'#323d1c'],[1288,'#3b461c']]],
  [1100, 1288, 605, 624, [[1100,'#39393a'],[1140,'#2d2c2e'],[1200,'#201d1d'],[1232,'#1c1c1f'],[1246,'#465424'],[1288,'#49592a']]],
  [1035, 1288, 671, 690, [[1035,'#323233'],[1090,'#232323'],[1150,'#2d2d2f'],[1245,'#1a1a22'],[1262,'#42511c'],[1288,'#475719']]],
  [965, 1288, 736, 755, [[965,'#1e1d1a'],[1020,'#1a1818'],[1200,'#1c1c1e'],[1250,'#1a1a18'],[1265,'#3d4818'],[1288,'#4c5518']]]
];
rows.forEach(([a, b, y1, y2, s]) => rect(a, y1, b, y2, grad(s, true, a, b)));

// round rods: [x1, x2, top, bottom]
const rods = [[412,423,672,810],[477,488,613,810],[542,553,548,810],[608,618,482,810],[673,684,417,810],[737,748,352,810],[800,811,352,810],[831,842,352,810],[864,875,352,810],[927,938,352,810],[989,1000,352,744],[1055,1065,352,679],[1120,1131,352,614],[1185,1196,352,547],[1250,1261,352,482]];
rods.forEach(([a, b, t, u], i) => {
  const y1 = i < 5 ? t + 18 : t, y2 = i > 9 ? u - 8 : u;
  const m = grad([[340,'#363a20'],[420,'#43481f'],[500,'#2a2d22'],[550,'#343f1f'],[600,'#485a1e'],[700,'#50621f'],[830,'#4c5a26']], false, 340, 830);
  const n = grad([[340,'#5a5b50'],[400,'#46473a'],[480,'#5b5a4e'],[520,'#41403a'],[620,'#38392f'],[690,'#66665f'],[740,'#55504c'],[830,'#777772']], false, 340, 830);
  const side = grad([[340,'#24261a'],[420,'#2b2e1b'],[520,'#1a1c19'],[600,'#28321a'],[700,'#37431b'],[830,'#333b1d']], false, 340, 830);
  rect(a, y1, b, y2, side);
  rect(a + 4, y1, a + 7, y2, m);
  rect(b - 4, y1, b - 3, y2, n);
  rect(a + 4, y1, a + 5, y2, '#181b16');
});

rect(367, 335, 1306, 352, 'url(#topBar)');
rect(370, 349, 1304, 350, '#55554f');
rect(367, 811, 1306, 827, 'url(#botBar)');
rect(372, 825, 1304, 826, '#4a4b46');
rect(1304, 345, 1305, 822, '#3b3c22');
rect(383, 351, 1290, 353, '#000');
rect(383, 810, 1290, 812, '#000');

// clear openings between members
const O = [];
const col = (x1, x2, ys) => ys.forEach(([a, b]) => O.push([x1, a, x2, b]));
const A = [353,408], B = [427,473], C = [492,538], D = [557,604], E = [623,671];
const c = [492,538], d = [557,605], e = [624,671], f = [690,736], h = [755,810];
col(385, 440, [A, B, C, D, E]); col(385, 412, [[690,810]]); col(423, 440, [[690,810]]);
col(459, 507, [A, B, C, D]); col(459, 477, [[623,810]]); col(488, 507, [[623,810]]);
col(525, 571, [A, B, C]); col(525, 542, [[557,810]]); col(553, 571, [[557,810]]);
col(590, 636, [A, B]); col(590, 608, [[492,810]]); col(618, 636, [[492,810]]);
col(655, 701, [A]); col(655, 673, [[427,810]]); col(684, 701, [[427,810]]);
[[720,737],[748,765],[783,800],[811,831],[842,864],[875,893],[912,927],[938,953]].forEach(p => col(p[0], p[1], [[353,810]]));
col(972, 989, [[353,736]]); col(1000, 1018, [[353,736]]); col(972, 1018, [h]);
col(1037, 1055, [[353,671]]); col(1065, 1083, [[353,671]]); col(1037, 1083, [f, h]);
col(1102, 1120, [[353,605]]); col(1131, 1148, [[353,605]]); col(1102, 1148, [e, f, h]);
col(1167, 1185, [[353,538]]); col(1196, 1215, [[353,538]]); col(1167, 1215, [d, e, f, h]);
col(1233, 1250, [[353,473]]); col(1261, 1288, [[353,473]]); col(1233, 1288, [c, d, e, f, h]);
O.forEach(([x1, y1, x2, y2]) => {
  if (x2 - x1 > 40) add('rect', {x: x1 - 2.5, y: y1 - 2.5, width: x2 - x1 + 4, height: y2 - y1 + 5, fill: 'none', stroke: '#5f614a', 'stroke-opacity': .75});
});
O.forEach(([x1, y1, x2, y2]) => {
  rect(x1 - 2, y1 - 2, x2 + 1, y2 + 2, '#000');
});
O.forEach(([x1, y1, x2, y2]) => {
  rect(x1, y1, x2, y2, '#ecebd5');
  if (y1 === 353) rect(x1, 351, x2, 353, '#008000');
});

// frame edges and mitres
rect(366, 334, 368, 829, '#000'); rect(1305, 334, 1307, 829, '#000'); rect(367, 827, 1306, 829, '#000');
rect(1288, 352, 1290, 811, '#000'); rect(383, 352, 385, 811, '#000');
rect(367, 334, 1306, 336, '#008000');
add('path', {d: 'M368 336L384 352M1306 336L1289 352M368 827L384 811M1306 827L1289 811', stroke: '#000', 'stroke-width': 2, fill: 'none'});
// highlighted members
[[927,929],[936,938],[953,955]].forEach(p => rect(p[0], 353, p[1], 811, '#008000'));
rect(970, 353, 972, 737, '#008000'); rect(970, 754, 972, 811, '#008000');
// end marks
[[710,411],[645,476],[579,541],[514,606],[449,673],[1222,476],[1157,542],[1092,608],[1026,674],[961,739],[1026,739]].forEach(p => rect(p[0], p[1], p[0] + 2, p[1] + 13, '#000'));
[[678,416],[613,482],[548,547],[482,612],[417,679],[1256,482],[1190,547],[1125,614],[1060,679],[995,745]].forEach((p, i) => {
  rect(p[0] - 2, p[1], p[0] + 2, p[1] + 2, '#000');
  if (i === 0 || i === 2) rect(p[0] - 1, p[1] + 1, p[0], p[1] + 14, '#7a7a72');
  if (i > 4) rect(p[0] - 1, p[1] - 9, p[0] + 1, p[1], '#3c4522');
});
</script>
</body>
</html>
